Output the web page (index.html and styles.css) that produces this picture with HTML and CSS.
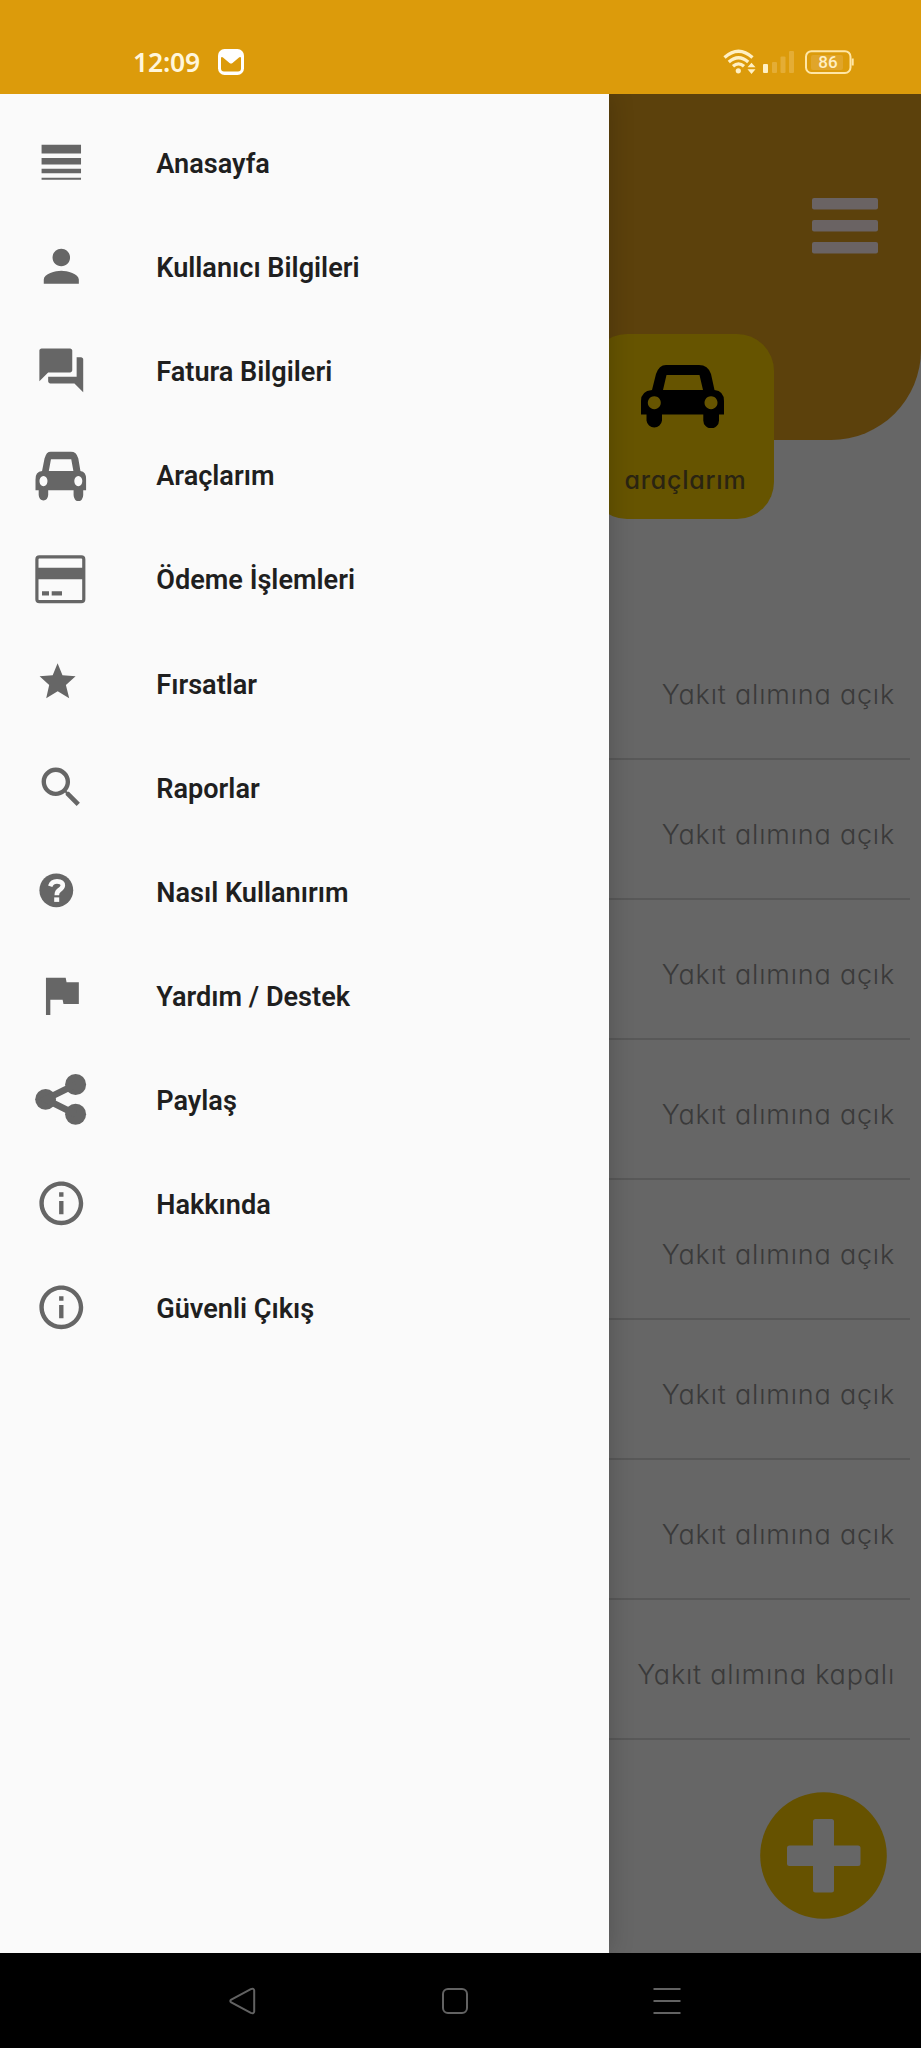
FILE: index.html
```html
<!DOCTYPE html>
<html lang="tr">
<head>
<meta charset="utf-8">
<title>Araçlarım</title>
<link rel="stylesheet" href="styles.css">
</head>
<body>
<svg class="defs" aria-hidden="true">
  <symbol id="car" viewBox="0 0 83 63" preserveAspectRatio="none">
    <path fill-rule="evenodd" d="M25 0H58Q67 0 70 9L73.500 25Q83 26 83 36V49.500H78V55.500A7.800 7.800 0 0 1 62.300 55.500V49.500H21V55.500A7.800 7.800 0 0 1 5.500 55.500V49.500H0V36Q0 26 11 25L15 9Q18 0 25 0ZM25.500 10L22 25H62L58.500 10ZM13.300 31.200a6.500 6.500 0 1 0 .01 0ZM70 31.200a6.500 6.500 0 1 0 .01 0Z"/>
  </symbol>
  <symbol id="info" viewBox="0 0 24 24">
    <path d="M11 17h2v-6h-2v6zm1-15C6.480 2 2 6.480 2 12s4.480 10 10 10 10-4.480 10-10S17.520 2 12 2zm0 18c-4.410 0-8-3.590-8-8s3.590-8 8-8 8 3.590 8 8-3.590 8-8 8zM11 9h2V7h-2v2z"/>
  </symbol>
</svg>

<div class="phone">
  <header class="status">
    <span class="clock">12:09</span>
    <svg class="mail" viewBox="0 0 26 26"><rect width="26" height="26" rx="6.500" fill="#fff"/><path d="M3 8.500Q4 7.500 5 8.500L11.500 14Q13 15 14.500 14L21 8.500Q22 7.500 23 8.500V19.500Q23 22.500 20 22.500H6Q3 22.500 3 19.500Z" fill="#dc9b0b"/></svg>
    <svg class="signals" viewBox="0 0 132 26">
      <g fill="none" stroke="#fff0c4" stroke-width="3.300">
        <path d="M1.500 8.500Q15.500-4 29.500 8.500"/><path d="M5.800 13Q15.500 4.500 25.200 13"/><path d="M10 17.300Q15.500 12.500 21 17.300"/>
      </g>
      <circle cx="15.300" cy="21.800" r="2.600" fill="#fff0c4"/>
      <path d="M24.500 18.300l4-4.600 4 4.600zM24.500 20.300l4 4.600 4-4.600z" fill="#fff0c4"/>
      <rect x="40" y="15" width="5" height="9" rx="1" fill="#fff0c4"/>
      <g fill="#e4ad35"><rect x="49" y="13" width="5" height="11" rx="1"/><rect x="57.500" y="7.500" width="5" height="16.500" rx="1"/><rect x="66" y="2" width="5" height="22" rx="1"/></g>
      <rect x="88" y="6" width="32" height="15" rx="2" fill="#e0a52a"/>
      <rect x="83" y="2.200" width="44.500" height="21.800" rx="5.500" fill="none" stroke="#ffe6a5" stroke-width="2"/>
      <path d="M129.700 9.500v7" stroke="#ffe6a5" stroke-width="2"/>
      <text class="battery" x="105" y="19" text-anchor="middle" fill="#fff0c4">86</text>
    </svg>
  </header>

  <main class="stage">
    <section class="page">
      <div class="hero">
        <svg class="burger" viewBox="0 0 66 56" fill="#6a6363"><rect width="66" height="11.500" rx="2"/><rect y="22" width="66" height="11.500" rx="2"/><rect y="44" width="66" height="11.500" rx="2"/></svg>
        <div class="tile">
          <svg class="tile-car"><use href="#car"/></svg>
          <span class="tile-label">araçlarım</span>
        </div>
      </div>
      <ul class="list">
        <li>Yakıt alımına açık</li>
        <li>Yakıt alımına açık</li>
        <li>Yakıt alımına açık</li>
        <li>Yakıt alımına açık</li>
        <li>Yakıt alımına açık</li>
        <li>Yakıt alımına açık</li>
        <li>Yakıt alımına açık</li>
        <li>Yakıt alımına kapalı</li>
      </ul>
      <svg class="fab" viewBox="0 0 127 127"><circle cx="63.500" cy="63.500" r="63.300" fill="#665200"/><path d="M55.500 27h16q2.500 0 2.500 2.500V53.500H98q2.500 0 2.500 2.500V71.500q0 2.500-2.500 2.500H74V98q0 2.500-2.500 2.500h-16Q53 100.500 53 98V74H29.500Q27 74 27 71.500V56q0-2.500 2.500-2.500H53V29.500Q53 27 55.500 27Z" fill="#666"/></svg>
    </section>

    <nav class="drawer">
      <a class="item"><svg class="icon" viewBox="0 0 24 24"><path d="M3 17h18v-2H3v2zm0 3h18v-1H3v1zm0-7h18v-3H3v3zm0-9v4h18V4H3z"/></svg><span>Anasayfa</span></a>
      <a class="item"><svg class="icon" viewBox="0 0 24 24"><path d="M12 12c2.210 0 4-1.790 4-4s-1.790-4-4-4-4 1.790-4 4 1.790 4 4 4zm0 2c-2.670 0-8 1.340-8 4v2h16v-2c0-2.660-5.330-4-8-4z"/></svg><span>Kullanıcı Bilgileri</span></a>
      <a class="item"><svg class="icon" viewBox="0 0 24 24"><path d="M21 6h-2v9H6v2c0 .55.45 1 1 1h11l4 4V7c0-.55-.45-1-1-1zm-4 6V3c0-.55-.45-1-1-1H3c-.55 0-1 .45-1 1v14l4-4h10c.55 0 1-.45 1-1z"/></svg><span>Fatura Bilgileri</span></a>
      <a class="item"><svg class="icon" viewBox="0 0 52.600 52.600"><use href="#car" x=".3" y="2.400" width="51" height="49.600"/></svg><span>Araçlarım</span></a>
      <a class="item"><svg class="icon" viewBox="0 0 52.600 52.600"><rect x="1.900" y="3.900" width="46.900" height="44.800" rx="2.500" fill="none" stroke="#666" stroke-width="3.200"/><path d="M2 14.800h47v11.500H2zM7 38.200h7v4.300H7zM16.700 38.200h10.300v4.300H16.700z"/></svg><span>Ödeme İşlemleri</span></a>
      <a class="item"><svg class="icon" viewBox="0 0 52.600 52.600"><path d="M22.600 6.200L27.500 18.200 40.600 19.300 30.900 28 34.200 41.200 22.700 34.300 11.200 41.200 14.200 28 4.600 19.300 17.700 18.200Z"/></svg><span>Fırsatlar</span></a>
      <a class="item"><svg class="icon" viewBox="0 0 24 24"><path d="M15.500 14h-.79l-.28-.27C15.410 12.590 16 11.110 16 9.500 16 5.910 13.090 3 9.500 3S3 5.910 3 9.500 5.910 16 9.500 16c1.610 0 3.090-.59 4.230-1.570l.27.28v.79l5 4.990L20.490 19l-4.990-5zm-6 0C7.010 14 5 11.990 5 9.500S7.010 5 9.500 5 14 7.010 14 9.500 11.990 14 9.500 14z"/></svg><span>Raporlar</span></a>
      <a class="item"><svg class="icon" viewBox="0 0 52.600 52.600"><circle cx="21.300" cy="25.300" r="16.900"/><path d="M15.200 21.200Q17 16.400 22 16.400Q27.800 16.500 27.800 20.600Q27.700 22.700 24.700 24.800Q21.800 26.700 21.800 30.200" fill="none" stroke="#fafafa" stroke-width="4.600"/><rect x="19.200" y="32.400" width="5" height="4.500" fill="#fafafa"/></svg><span>Nasıl Kullanırım</span></a>
      <a class="item"><svg class="icon" viewBox="0 0 24 24"><path d="M14.400 6L14 4H5v17h2v-7h5.600l.4 2h7V6z"/></svg><span>Yardım / Destek</span></a>
      <a class="item"><svg class="icon" viewBox="0 0 52.600 52.600"><circle cx="10.600" cy="26.300" r="10.400"/><circle cx="40.600" cy="11.500" r="10.500"/><circle cx="40.600" cy="41.300" r="10.500"/><path d="M40.600 11.500L10.600 26.300L40.600 41.300" fill="none" stroke="#666" stroke-width="6.600"/></svg><span>Paylaş</span></a>
      <a class="item"><svg class="icon"><use href="#info"/></svg><span>Hakkında</span></a>
      <a class="item"><svg class="icon"><use href="#info"/></svg><span>Güvenli Çıkış</span></a>
    </nav>
  </main>

  <footer class="navbar">
    <svg class="key" viewBox="0 0 28 28"><path d="M2.300 12.600L21.800 2.100Q25 .8 25.200 3.500V24.500Q25 27.200 21.800 25.900L2.300 15.400Q.3 14 2.300 12.600Z"/></svg>
    <svg class="key" viewBox="0 0 28 28"><rect x="2" y="2" width="24" height="24" rx="5"/></svg>
    <svg class="key" viewBox="0 0 28 28"><path d="M.5 2h27M.5 14h27M.5 26h27"/></svg>
  </footer>
</div>
</body>
</html>
```
FILE: styles.css
```css
* { box-sizing: border-box; }
body { margin: 0; background: #000; }
.defs { position: absolute; width: 0; height: 0; }

.phone {
  width: 921px;
  height: 2048px;
  display: flex;
  flex-direction: column;
  overflow: hidden;
}

.status {
  height: 94px;
  flex: none;
  display: flex;
  align-items: center;
  padding: 29px 66px 0 133px;
  background: #dc9b0b;
}
.clock {
  width: 85px;
  font: 600 26.5px/30px "Noto Sans", sans-serif;
  letter-spacing: -.2px;
  color: #fff6dc;
}
.mail { width: 26px; height: 26px; }
.signals { width: 132px; height: 26px; margin-left: auto; }
.battery { font: 500 17px Roboto, sans-serif; }

.stage { position: relative; height: 1859px; flex: none; background: #666; }
.page { display: flex; flex-direction: column; }
.hero {
  height: 346px;
  display: flex;
  flex-direction: column;
  align-items: flex-end;
  padding: 104px 43px 0 0;
  background: #5c410c;
  border-bottom-right-radius: 90px;
}
.burger { width: 66px; height: 56px; flex: none; }
.tile {
  width: 184px;
  height: 185px;
  flex: none;
  margin: 80px 104px 0 0;
  padding-top: 31px;
  padding-right: 5px;
  display: flex;
  flex-direction: column;
  align-items: center;
  background: #665400;
  border-radius: 37px;
}
.tile-car { width: 83px; height: 63px; margin-left: 5px; fill: #000; }
.tile-label {
  margin-top: 37px;
  margin-left: 12px;
  font: 500 25px/30px Inter, sans-serif;
  font-feature-settings: "cv11";
  letter-spacing: .8px;
  color: #2a2412;
}

.list {
  margin: 180px 11px 0 0;
  padding: 0;
  list-style: none;
  font: 300 27px/40px Inter, sans-serif;
  font-feature-settings: "cv11";
  letter-spacing: .8px;
  color: #3a3a3a;
}
.list li {
  height: 140px;
  padding: 55px 15px 0 0;
  text-align: right;
  border-bottom: 2px solid #585858;
}
.fab { width: 127px; height: 127px; margin: 52px 34px 0 auto; }

.drawer {
  position: absolute;
  inset: 0 312px 0 0;
  padding-top: 16.5px;
  background: #fafafa;
  box-shadow: 0 0 24px rgba(0, 0, 0, .2);
  clip-path: inset(0 -40px 0 0);
}
.item {
  height: 104.1px;
  display: flex;
  align-items: center;
  gap: 69px;
  padding-left: 34.7px;
  font: 600 27.1px/34px Roboto, sans-serif;
  color: #1f1f1f;
}
.item span { padding-top: 3px; }
.icon { width: 52.6px; height: 52.6px; flex: none; fill: #666; }

.navbar {
  flex: 1;
  display: flex;
  align-items: center;
  gap: 184px;
  padding-left: 228.5px;
  background: #000;
}
.key { width: 28px; height: 28px; fill: none; stroke: #626262; stroke-width: 2; }
```
